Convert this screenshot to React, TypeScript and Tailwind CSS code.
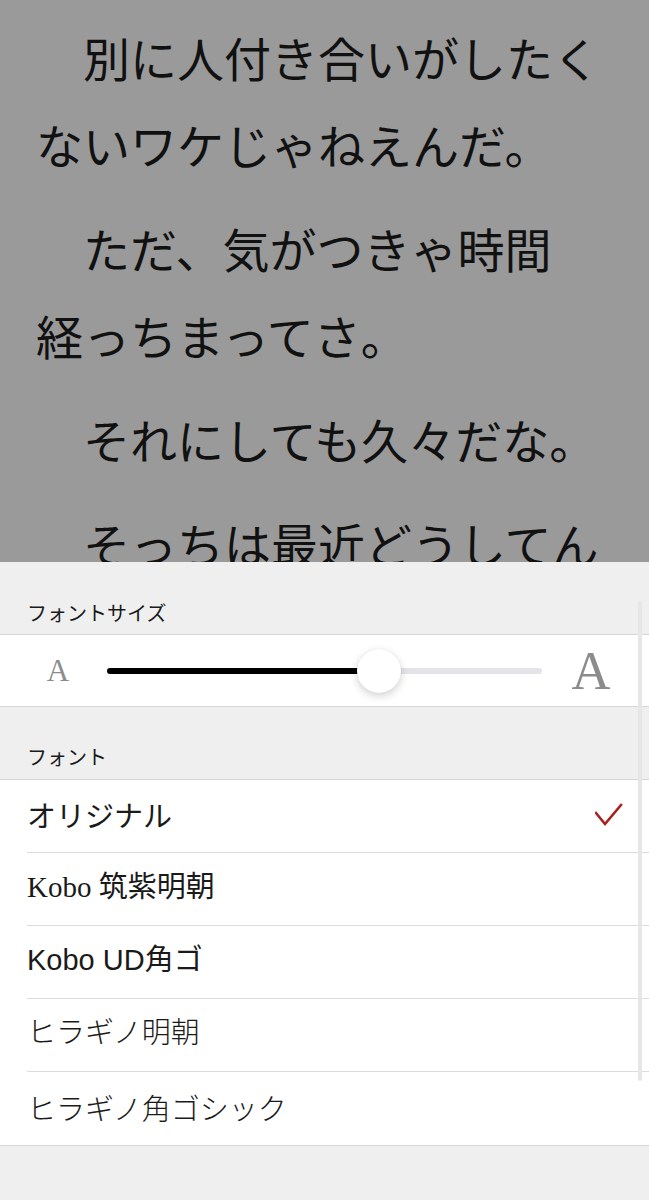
import React from "react";

const sans = { fontFamily: '"Noto Sans CJK JP", "Noto Sans", sans-serif' };
const serif = { fontFamily: '"Liberation Serif", "Noto Sans CJK JP", serif' };

const paragraphs: string[][] = [
  ["\u3000別に人付き合いがしたく", "ないワケじゃねえんだ。"],
  ["\u3000ただ、気がつきゃ時間", "経っちまってさ。"],
  ["\u3000それにしても久々だな。"],
  ["\u3000そっちは最近どうしてん", "の？"],
];

const fonts: { label: string; family: React.CSSProperties; cls: string; checked?: boolean }[] = [
  { label: "オリジナル", family: sans, cls: "font-normal", checked: true },
  { label: "Kobo 筑紫明朝", family: serif, cls: "font-normal" },
  { label: "Kobo UD角ゴ", family: { fontFamily: '"Liberation Sans", "Noto Sans CJK JP", sans-serif' }, cls: "font-normal" },
  { label: "ヒラギノ明朝", family: serif, cls: "font-light" },
  { label: "ヒラギノ角ゴシック", family: sans, cls: "font-light" },
];

export default function App() {
  return (
    <div className="relative w-[649px] h-[1200px] overflow-hidden bg-[#efefef]">
      {/* Reader area */}
      <div className="h-[562px] overflow-hidden bg-[#9a9a9a] pl-[36px] pt-[13px] text-[#111]" style={sans}>
        {paragraphs.map((p, i) => (
          <div key={i} className="mb-[17px]">
            {p.map((line, j) => (
              <div key={j} className="text-[47px] leading-[87px] whitespace-nowrap">
                {line}
              </div>
            ))}
          </div>
        ))}
      </div>

      {/* Settings panel */}
      <div className="bg-[#efefef]" style={sans}>
        <div className="h-[72px] flex items-end px-[27px] pb-[7px] text-[20px] text-[#1a1a1a] leading-[28px]">
          フォントサイズ
        </div>
        <div className="h-[73px] bg-white border-y border-[#d6d6d6] flex items-center pl-[45px]">
          <span className="w-[26px] text-center text-[31px] text-[#8c8c8c] leading-none" style={serif}>
            A
          </span>
          <div className="relative ml-[36px] w-[435px] h-[6px] rounded-full bg-[#e3e3e8]">
            <div className="absolute left-0 top-0 h-[6px] w-[272px] rounded-full bg-black" />
            <div className="absolute left-[250px] top-[-19px] w-[44px] h-[44px] rounded-full bg-white shadow-[0_3px_8px_rgba(0,0,0,0.18),0_0_1px_rgba(0,0,0,0.12)]" />
          </div>
          <span className="ml-[27px] w-[44px] text-center text-[54px] text-[#8c8c8c] leading-none" style={serif}>
            A
          </span>
        </div>
        <div className="h-[72px] flex items-end px-[27px] pb-[8px] text-[20px] text-[#1a1a1a] leading-[28px]">
          フォント
        </div>
        <div className="bg-white border-y border-[#d6d6d6]">
          {fonts.map((f, i) => (
            <div key={i} className="pl-[27px]">
              <div
                className={
                  "h-[73px] flex items-center justify-between pr-[26px] pb-[3px] " +
                  (i < fonts.length - 1 ? "border-b border-[#dcdcdc]" : "")
                }
              >
                <span className={"text-[29px] text-[#1a1a1a] leading-none " + f.cls} style={f.family}>
                  {f.label}
                </span>
                {f.checked && (
                  <svg width="28" height="24" viewBox="0 0 28 24" fill="none">
                    <polyline points="1,10 10,21 26,2" stroke="#a8201f" strokeWidth="2.6" strokeLinecap="square" />
                  </svg>
                )}
              </div>
            </div>
          ))}
        </div>
      </div>

      {/* Scrollbar */}
      <div className="absolute left-[638px] top-[601px] w-[4px] h-[480px] rounded-full bg-[#e6e6e6]" />
    </div>
  );
}
